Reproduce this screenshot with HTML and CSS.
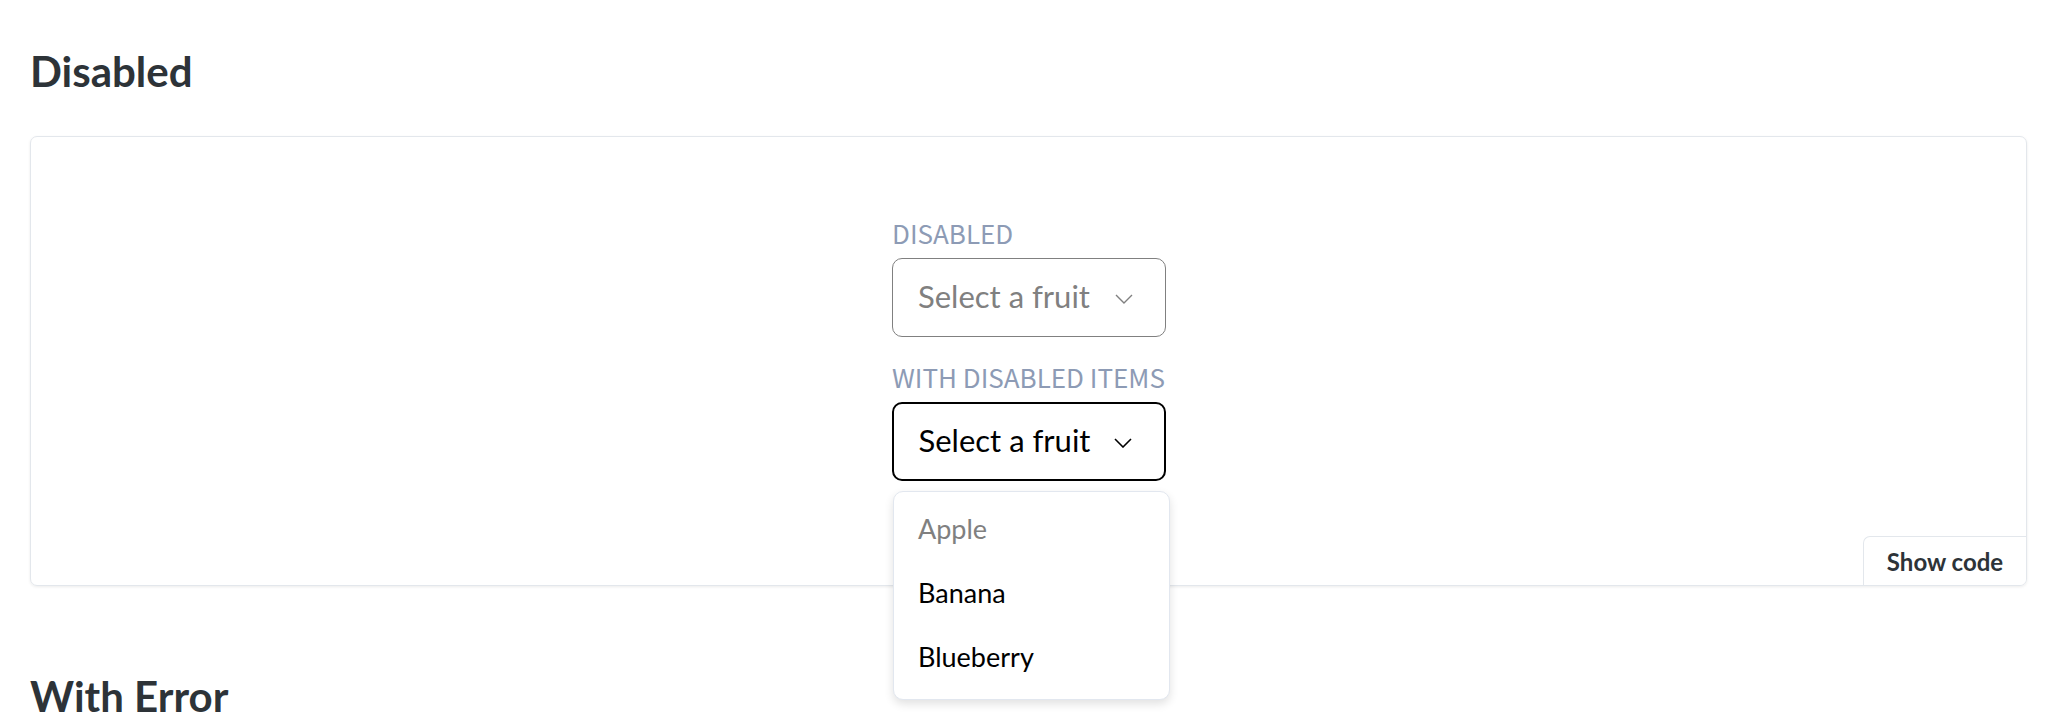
FILE: index.html
```html
<!DOCTYPE html>
<html lang="en">
<head>
<meta charset="utf-8">
<title>Select - Disabled</title>
<link rel="stylesheet" href="styles.css">
</head>
<body>
<main class="page">
  <h2 class="section-title">Disabled</h2>
  <div class="card">
    <div class="field-group">
      <label class="field-label">DISABLED</label>
      <div class="select select-disabled">
        <span>Select a fruit</span>
        <svg class="chevron" width="18" height="10" viewBox="0 0 18 10"><polyline points="1,1 9,9 17,1" fill="none" stroke="currentColor" stroke-width="1.4"/></svg>
      </div>
      <label class="field-label field-label-second">WITH DISABLED ITEMS</label>
      <div class="select-wrap">
        <div class="select select-open">
          <span>Select a fruit</span>
          <svg class="chevron" width="18" height="10" viewBox="0 0 18 10"><polyline points="1,1 9,9 17,1" fill="none" stroke="currentColor" stroke-width="1.6"/></svg>
        </div>
        <ul class="dropdown">
          <li class="option option-disabled">Apple</li>
          <li class="option">Banana</li>
          <li class="option">Blueberry</li>
        </ul>
      </div>
    </div>
    <button class="show-code">Show code</button>
  </div>
  <h2 class="section-title section-title-next">With Error</h2>
</main>
</body>
</html>
```

FILE: styles.css
```css
html, body {
  margin: 0;
  padding: 0;
  background: #ffffff;
}
body {
  overflow: hidden;
}
.page {
  padding: 0 31px 0 30px;
  font-family: "Lato", "Noto Sans", sans-serif;
}
.section-title {
  font-family: "Lato", sans-serif;
  font-weight: 700;
  font-size: 42px;
  line-height: 48px;
  color: #2d3338;
  margin: 47px 0 41px 0;
}
.section-title-next {
  margin-top: 86px;
}
.card {
  position: relative;
  height: 450px;
  box-sizing: border-box;
  border: 1px solid #e3e7ec;
  border-radius: 7px;
  box-shadow: 0 1px 3px rgba(0, 0, 0, 0.08);
  display: flex;
  justify-content: center;
  padding-top: 80px;
}
.field-group {
  width: 274px;
  display: flex;
  flex-direction: column;
  margin-left: 1px;
}
.field-label {
  font-family: "Noto Sans CJK KR", "Noto Sans", sans-serif;
  font-size: 26px;
  line-height: 32px;
  color: #8d9bb5;
  margin-bottom: 9px;
  white-space: nowrap;
}
.field-label-second {
  margin-top: 24px;
}
.select {
  height: 79px;
  box-sizing: border-box;
  border-radius: 10px;
  display: flex;
  align-items: center;
  justify-content: space-between;
  padding: 0 32px 3px 25px;
  font-family: "Lato", sans-serif;
  font-size: 31px;
}
.select-disabled {
  border: 1.5px solid #808080;
  color: #808080;
}
.select-open {
  border: 2px solid #000000;
  color: #000000;
  padding-left: 24.5px;
}
.chevron {
  display: block;
  margin-top: 5px;
}
.select-wrap {
  position: relative;
}
.dropdown {
  position: absolute;
  top: calc(100% + 10px);
  left: 1px;
  width: 277px;
  height: 209px;
  box-sizing: border-box;
  margin: 0;
  padding: 4px 0 13px 0;
  list-style: none;
  background: #ffffff;
  border: 1px solid #e2e7ef;
  border-radius: 10px;
  box-shadow: 0 4px 10px rgba(0, 0, 0, 0.12);
  z-index: 2;
}
.option {
  height: 64px;
  display: flex;
  align-items: center;
  padding-left: 24px;
  font-family: "Lato", sans-serif;
  font-size: 27px;
  color: #000000;
}
.option-disabled {
  color: #808080;
}
.show-code {
  position: absolute;
  right: 0;
  bottom: 0;
  width: 163px;
  height: 49px;
  box-sizing: border-box;
  background: #ffffff;
  border: 0;
  border-top: 1px solid #e3e7ec;
  border-left: 1px solid #e3e7ec;
  border-top-left-radius: 7px;
  border-bottom-right-radius: 7px;
  font-family: "Lato", sans-serif;
  font-weight: 700;
  font-size: 24px;
  color: #2d3338;
  padding: 0;
  cursor: pointer;
}
```
